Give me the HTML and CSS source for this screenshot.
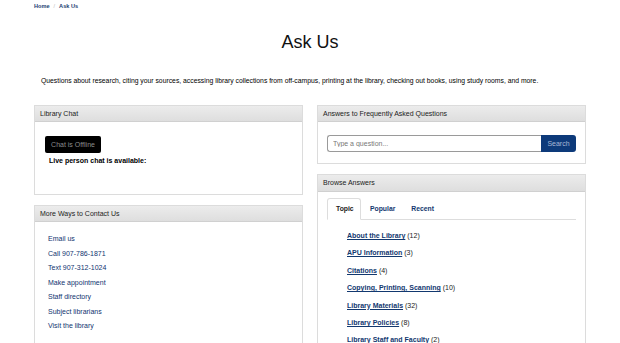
FILE: index.html
```html
<!DOCTYPE html>
<html>
<head>
<meta charset="utf-8">
<link rel="stylesheet" href="styles.css">
</head>
<body>
<nav class="crumbs"><a href="#">Home</a><span class="sep">/</span><span class="cur">Ask Us</span></nav>
<h1 class="title">Ask Us</h1>
<p class="intro">Questions about research, citing your sources, accessing library collections from off-campus, printing at the library, checking out books, using study rooms, and more.</p>
<div class="cols">
  <div class="col">
    <section class="panel chat">
      <div class="ph">Library Chat</div>
      <div class="pb">
        <button class="offline">Chat is Offline</button>
        <p class="live">Live person chat is available:</p>
      </div>
    </section>
    <section class="panel ways">
      <div class="ph">More Ways to Contact Us</div>
      <ul class="pb links">
        <li><a href="#">Email us</a></li>
        <li><a href="#">Call 907-786-1871</a></li>
        <li><a href="#">Text 907-312-1024</a></li>
        <li><a href="#">Make appointment</a></li>
        <li><a href="#">Staff directory</a></li>
        <li><a href="#">Subject librarians</a></li>
        <li><a href="#">Visit the library</a></li>
      </ul>
    </section>
  </div>
  <div class="col">
    <section class="panel faq">
      <div class="ph">Answers to Frequently Asked Questions</div>
      <div class="pb">
        <div class="search"><input type="text" placeholder="Type a question..."><button>Search</button></div>
      </div>
    </section>
    <section class="panel browse">
      <div class="ph">Browse Answers</div>
      <div class="pb">
        <div class="tabs"><span class="tab active">Topic</span><span class="tab">Popular</span><span class="tab">Recent</span></div>
        <ul class="topics">
          <li><a href="#">About the Library</a> (12)</li>
          <li><a href="#">APU Information</a> (3)</li>
          <li><a href="#">Citations</a> (4)</li>
          <li><a href="#">Copying, Printing, Scanning</a> (10)</li>
          <li><a href="#">Library Materials</a> (32)</li>
          <li><a href="#">Library Policies</a> (8)</li>
          <li><a href="#">Library Staff and Faculty</a> (2)</li>
        </ul>
      </div>
    </section>
  </div>
</div>
</body>
</html>
```
FILE: styles.css
```css
* { box-sizing: border-box; }
html, body { margin: 0; padding: 0; background: #fff; }
body {
  font-family: "Liberation Sans", Arial, sans-serif;
  font-size: 7px;
  color: #111;
  overflow: hidden;
  height: 343px;
}
a { color: #0f3470; text-decoration: none; }
.crumbs {
  padding: 2px 0 0 34px;
  font-size: 5.6px;
  font-weight: bold;
  line-height: 8px;
  height: 12px;
}
.crumbs a, .crumbs .cur { color: #1a3d70; }
.crumbs .sep { color: #bbb; font-weight: normal; margin: 0 4px; }
.title {
  margin: 18px 0 0;
  text-align: center;
  font-size: 18px;
  font-weight: normal;
  line-height: 24px;
  color: #111;
}
.intro {
  margin: 22px 0 0 41px;
  font-size: 6.8px;
  line-height: 10px;
  color: #000;
}
.cols {
  display: grid;
  grid-template-columns: 269px 269px;
  column-gap: 14px;
  margin: 19px 0 0 34px;
}
.col { display: flex; flex-direction: column; gap: 10px; }
.panel {
  border: 1px solid #dcdcdc;
  background: #fff;
}
.ph {
  height: 16px;
  line-height: 15px;
  padding-left: 5px;
  background: linear-gradient(#ececec, #dedede);
  border-bottom: 1px solid #d0d0d0;
  color: #222;
  font-size: 7px;
}
.browse .ph { height: 17px; line-height: 16px; }
.chat .pb { padding: 14px 10px 0; height: 72px; }
.offline {
  display: block;
  width: 56px;
  height: 17px;
  border: 0;
  border-radius: 2px;
  background: #000;
  color: #8c8c8c;
  font-family: inherit;
  font-size: 7px;
  padding: 0;
}
.live { margin: 3px 0 0 4px; font-weight: bold; font-size: 7px; color: #000; line-height: 10px; }
.links { list-style: none; margin: 0; padding: 10px 13px 20px; }
.links li { line-height: 14.5px; font-size: 7px; }
.faq .pb { padding: 13px 9px 11px; }
.search { display: flex; height: 17px; }
.search input {
  flex: 1;
  min-width: 0;
  border: 1px solid #9a9a9a;
  border-right: 0;
  border-radius: 3px 0 0 3px;
  font-family: inherit;
  font-size: 7px;
  padding: 0 5px;
  color: #333;
}
.search input::placeholder { color: #777; }
.search button {
  width: 35px;
  border: 0;
  border-radius: 0 3px 3px 0;
  background: #0d3a7a;
  color: #a9b8d6;
  font-family: inherit;
  font-size: 7px;
  padding: 0;
}
.browse .pb { padding: 6px 9px 0; }
.tabs { display: flex; border-bottom: 1px solid #ddd; height: 22px; }
.tab {
  display: block;
  padding: 0 7px;
  line-height: 20px;
  color: #12386f;
  font-weight: bold;
  font-size: 6.8px;
  border: 1px solid transparent;
  border-radius: 3px 3px 0 0;
}
.tab.active {
  width: 34px;
  padding: 0 0 0 8px;
  margin-right: 1px;
  color: #222;
  border-color: #ddd;
  border-bottom-color: #fff;
  background: #fff;
  height: 22px;
}
.topics { list-style: none; margin: 0; padding: 7px 0 0 20px; }
.topics li { line-height: 17.4px; font-size: 7px; color: #222; }
.topics a { font-weight: bold; text-decoration: underline; color: #12386f; }
```
